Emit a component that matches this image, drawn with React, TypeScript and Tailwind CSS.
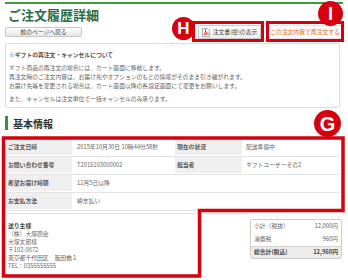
import React from 'react'

const jp = "font-['Noto_Sans_CJK_JP','Noto_Sans',sans-serif]"

function Badge({ letter, className }: { letter: string; className: string }) {
  return (
    <div
      className={`absolute flex items-center justify-center rounded-full bg-[#d7000f] text-white font-bold font-['Liberation_Sans',sans-serif] leading-none ${className}`}
    >
      {letter}
    </div>
  )
}

function PdfIcon() {
  return (
    <svg width="8" height="9" viewBox="0 0 8 9">
      <path d="M0.5 0.5h5l2 2v6h-7z" fill="#fff" stroke="#999" strokeWidth="0.8" />
      <path d="M2 7c1-2 2-4 1.5-5.5C3 3 4 5 6.5 6 5 5.8 3 6 2 7z" fill="none" stroke="#d0111b" strokeWidth="0.8" />
    </svg>
  )
}

function Row({ cells }: { cells: [string, string, string?, string?] }) {
  const [l1, v1, l2, v2] = cells
  return (
    <div className="grid grid-cols-[67px_103px_67px_1fr] h-[18px] border-b border-[#e3e3e3]">
      <div className="flex items-center pl-[3px] bg-[#efefef] border-b border-white font-bold text-[#555]">{l1}</div>
      <div className="flex items-center pl-[5px]">{v1}</div>
      {l2 ? (
        <div className="flex items-center pl-[2px] bg-[#efefef] border-b border-white font-bold text-[#555]">{l2}</div>
      ) : (
        <div />
      )}
      <div className="flex items-center pl-[4px]">{v2}</div>
    </div>
  )
}

export default function App() {
  return (
    <div className={`relative w-[348px] h-[280px] overflow-hidden bg-white text-[#666] ${jp}`}>
      <div className="px-[5px] pt-[2px]">
        <div className="h-[2px] bg-[#3f9b3f]" />
        <h1 className="mt-[4px] ml-[3px] text-[13px] leading-[14px] font-bold text-[#2a6f47]">ご注文履歴詳細</h1>

        <div className="flex items-center h-[20px] whitespace-nowrap">
          <button className="w-[77px] h-[10px] flex items-center justify-center border border-[#c8c8c8] rounded-[2px] bg-gradient-to-b from-white to-[#e6e6e6] text-[5.8px] text-[#444]">
            前のページへ戻る
          </button>
          <div className="flex-1" />
          <button className="w-[63px] h-[14px] flex items-center justify-center gap-[3px] border border-[#ccc] bg-gradient-to-b from-white to-[#eee] text-[5.8px] text-[#444]">
            <PdfIcon />
            注文書(控)の表示
          </button>
          <button className="ml-[7px] mr-[1px] w-[74px] h-[14px] flex items-center justify-center border border-[#e5e5e5] bg-[#fafafa] text-[5.8px] text-[#ee6a1f]">
            この注文内容で再注文する
          </button>
        </div>

        <div className="mt-[1px] mr-[3px] h-[65px] border border-[#dddddd] rounded-[2px] px-[3px] pt-[6px] text-[5.8px] leading-[9px] whitespace-nowrap">
          <p className="font-bold text-[#555]">※ギフトの再注文・キャンセルについて</p>
          <p className="mt-[4px]">ギフト商品の再注文の場合には、カート画面に移動します。</p>
          <p>再注文時のご注文内容は、お届け先やオプションのもとの情報がそのまま引き継がれます。</p>
          <p>お届け先等を変更される場合は、カート画面以降の各設定画面にて変更をお願いします。</p>
          <p className="mt-[4px]">また、キャンセルは注文単位で一括キャンセルのみ承ります。</p>
        </div>

        <div className="mt-[8px] h-[14px] flex items-center border-l-[3px] border-[#3f8f3f] pl-[5px] text-[10px] font-bold text-[#333]">
          基本情報
        </div>

        <div className="mt-[9px] mr-[3px] text-[5.8px] text-[#666] whitespace-nowrap">
          <Row cells={['ご注文日時', '2015年10月30日 10時44分58秒', '現在の状況', '配送準備中']} />
          <Row cells={['お問い合わせ番号', 'T2015103000002', '担当者', 'ギフトユーザーその2']} />
          <Row cells={['希望お届け時期', '12月5日以降']} />
          <Row cells={['お支払方法', '締支払い']} />
        </div>

        <div className="mt-[2px] flex text-[5.8px] whitespace-nowrap">
          <div className="flex-1 border-t border-[#e3e3e3] pt-[8px] pl-[3px] leading-[8px]">
            <p className="font-bold text-[#444]">送り主様</p>
            <p>（株）大塚商会</p>
            <p>大塚太郎様</p>
            <p>〒102-0072</p>
            <p>東京都千代田区　飯田橋１</p>
            <p>TEL：0355555555</p>
          </div>
          <div className="mt-[6px] mr-[1px] w-[92px] h-[40px] border border-[#cccccc] rounded-[2px] overflow-hidden">
            <div className="flex justify-between items-center h-[13px] px-[3px]">
              <span>小計（税抜）</span>
              <span>12,000円</span>
            </div>
            <div className="flex justify-between items-center h-[13px] px-[3px]">
              <span>消費税</span>
              <span>960円</span>
            </div>
            <div className="flex justify-between items-center h-[12px] px-[3px] bg-[#ececec] border-t border-[#d5d5d5] font-bold text-[#444]">
              <span>総合計(税込)</span>
              <span>12,960円</span>
            </div>
          </div>
        </div>
      </div>

      {/* annotation overlay */}
      <div className="absolute left-[192px] top-[21px] w-[72px] h-[21px] border-[3px] border-[#d7000f]" />
      <div className="absolute left-[266px] top-[21px] w-[78px] h-[21px] border-[3px] border-[#d7000f]" />
      <svg className="absolute left-0 top-0" width="348" height="280">
        <path d="M3.5 138H343V210.5H199.5V276H3.5Z" fill="none" stroke="#d7000f" strokeWidth="3.5" />
      </svg>
      <Badge letter="H" className="left-[172px] top-[17px] w-[23px] h-[23px] text-[17px]" />
      <Badge letter="I" className="left-[318px] top-[1px] w-[25px] h-[25px] text-[18px]" />
      <Badge letter="G" className="left-[314px] top-[110px] w-[27px] h-[27px] text-[20px]" />
    </div>
  )
}
